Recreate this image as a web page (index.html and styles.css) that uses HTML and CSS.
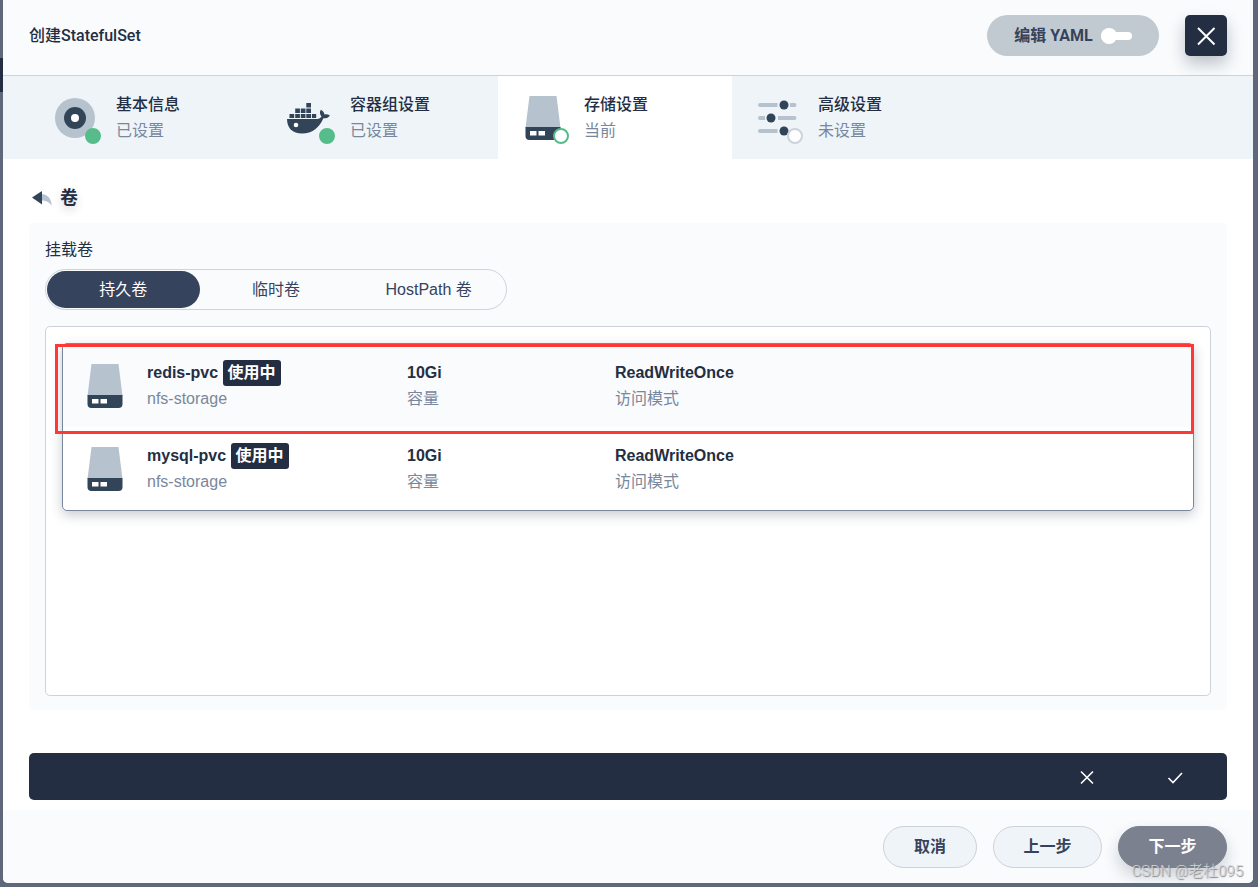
FILE: index.html
```html
<!DOCTYPE html>
<html lang="zh-CN">
<head>
<meta charset="utf-8">
<title>创建StatefulSet</title>
<link rel="stylesheet" href="styles.css">
</head>
<body>
<svg class="defs" aria-hidden="true">
  <symbol id="disk" viewBox="0 0 48 48">
    <path d="M10.500 2h27l4 32h-35z" fill="#b6c2cd"/>
    <path d="M6.500 33h35v9q0 4-4 4h-27q-4 0-4-4z" fill="#324558"/>
    <path d="M11 37h6.500v4.500H11zM19.500 37H26v4.500h-6.500z" fill="#fff"/>
  </symbol>
</svg>
<main class="dialog">
  <header class="header">
    <h1 class="title">创建StatefulSet</h1>
    <button class="yaml" type="button">编辑 YAML <span class="switch"></span></button>
    <button class="close" type="button" aria-label="关闭">
      <svg width="20" height="20" viewBox="0 0 20 20"><path d="M2 2l16.500 16.500M18.500 2L2 18.500" stroke="#fff" stroke-width="2" fill="none"/></svg>
    </button>
  </header>
  <nav class="steps">
    <div class="step">
      <span class="step-icon">
        <svg width="48" height="48" viewBox="0 0 48 48"><circle cx="24" cy="24" r="20" fill="#b6c2cd"/><circle cx="24" cy="24" r="11" fill="#324558"/><circle cx="24" cy="24" r="4" fill="#fff"/></svg>
        <i class="dot done"></i>
      </span>
      <div class="step-text"><div class="name">基本信息</div><div class="state">已设置</div></div>
    </div>
    <div class="step">
      <span class="step-icon">
        <svg width="48" height="48" viewBox="0 0 48 48" fill="#324558">
          <path d="M2 25h28.500c3 0 5.200-.9 6-2.600-2-2-2-4.700-.6-6.600 2.200 1.200 3.200 2.700 3.500 4.600 1.800-.3 3.800-.1 5.500 1-1.300 2.200-3.500 3-6.500 2.900C34 34 27.500 39.500 17 39.500 7.500 39.500 2 34 2 25z"/>
          <path d="M4.500 20h4.700v4H4.500zM10.200 20h4.700v4h-4.700zM15.800 20h4.700v4h-4.700zM21.300 20H26v4h-4.700zM26.900 20h4.300v4h-4.300zM10.200 14.500h4.700v4.500h-4.700zM15.800 14.500h4.700v4.500h-4.700zM21.300 14.500H26v4.500h-4.700zM21.300 9H26v4.500h-4.700z"/>
          <circle cx="11" cy="31" r="2.300" fill="#fff"/>
        </svg>
        <i class="dot done"></i>
      </span>
      <div class="step-text"><div class="name">容器组设置</div><div class="state">已设置</div></div>
    </div>
    <div class="step current">
      <span class="step-icon">
        <svg width="48" height="48"><use href="#disk"/></svg>
        <i class="dot now"></i>
      </span>
      <div class="step-text"><div class="name">存储设置</div><div class="state">当前</div></div>
    </div>
    <div class="step">
      <span class="step-icon">
        <svg width="48" height="48" viewBox="0 0 48 48">
          <path d="M7 11h15M39 11h2.500M7 24h3M27 24h14.500M7 37h15" stroke="#b6c2cd" stroke-width="4" stroke-linecap="round"/>
          <path d="M20 11h4.500M37 11h2M9 24h3M25 24h3M20 37h4.500" stroke="#b6c2cd" stroke-width="4"/>
          <g fill="#324558"><circle cx="31" cy="11" r="4.500"/><circle cx="18" cy="24" r="4.500"/><circle cx="31" cy="37" r="4.500"/></g>
        </svg>
        <i class="dot"></i>
      </span>
      <div class="step-text"><div class="name">高级设置</div><div class="state">未设置</div></div>
    </div>
  </nav>
  <section class="content">
    <div class="back-row">
      <button class="back" type="button" aria-label="返回">
        <svg width="24" height="24" viewBox="0 0 24 24"><path d="M12 8c6 .2 10.500 4 10.700 12C20.500 16 17 14.500 12 14.500z" fill="#b6c2cd"/><path d="M3 11.500L13 5v13.500z" fill="#324558"/></svg>
      </button>
      <h2 class="back-title">卷</h2>
    </div>
    <div class="panel">
      <div class="label">挂载卷</div>
      <div class="tabs">
        <button class="tab active" type="button">持久卷</button>
        <button class="tab" type="button">临时卷</button>
        <button class="tab" type="button">HostPath 卷</button>
      </div>
      <div class="list-box">
        <div class="list">
          <div class="row selected">
            <svg width="48" height="48"><use href="#disk"/></svg>
            <div><div class="strong">redis-pvc <span class="tag">使用中</span></div><div class="muted">nfs-storage</div></div>
            <div><div class="strong">10Gi</div><div class="muted">容量</div></div>
            <div><div class="strong">ReadWriteOnce</div><div class="muted">访问模式</div></div>
          </div>
          <div class="row">
            <svg width="48" height="48"><use href="#disk"/></svg>
            <div><div class="strong">mysql-pvc <span class="tag">使用中</span></div><div class="muted">nfs-storage</div></div>
            <div><div class="strong">10Gi</div><div class="muted">容量</div></div>
            <div><div class="strong">ReadWriteOnce</div><div class="muted">访问模式</div></div>
          </div>
          <div class="highlight"></div>
        </div>
      </div>
    </div>
    <div class="confirm">
      <button type="button" aria-label="取消选择"><svg width="16" height="16" viewBox="0 0 16 16"><path d="M2 2.500l12 12M14 2.500l-12 12" stroke="#fff" stroke-width="1.600" fill="none"/></svg></button>
      <button type="button" aria-label="确认选择"><svg width="16" height="16" viewBox="0 0 16 16"><path d="M1.500 9l4.500 4.500L15 4" stroke="#fff" stroke-width="1.600" fill="none"/></svg></button>
    </div>
  </section>
  <footer class="footer">
    <button class="btn" type="button">取消</button>
    <button class="btn wide" type="button">上一步</button>
    <button class="btn wide next" type="button">下一步</button>
  </footer>
</main>
<div class="watermark">CSDN @老杜095</div>
</body>
</html>
```
FILE: styles.css
```css
* { box-sizing: border-box; }
body {
  margin: 0;
  padding: 0 5px 4px 3px;
  min-height: 100vh;
  display: flex;
  background: linear-gradient(#242e42, #242e42) 0 58px / 3px 34px no-repeat, #5f687b;
  font: 16px/26px Roboto, "Noto Sans CJK SC", sans-serif;
  color: #242e42;
}
button { font: inherit; color: inherit; border: 0; padding: 0; background: none; cursor: pointer; }
svg { display: block; flex: none; }
h1, h2 { margin: 0; }
.defs { position: absolute; width: 0; height: 0; }
.dialog {
  flex: 1;
  min-width: 0;
  display: flex;
  flex-direction: column;
  background: #fff;
  border-radius: 0 0 5px 5px;
  overflow: hidden;
}
.header {
  display: flex;
  align-items: center;
  padding: 15px 26px 19px;
  background: #f9fbfd;
  border-bottom: 1px solid #ccd3db;
}
.title { flex: 1; font-size: 16px; font-weight: 500; }
.yaml {
  display: flex;
  align-items: center;
  justify-content: center;
  gap: 8px;
  width: 172px;
  height: 41px;
  margin-right: 26px;
  border-radius: 21px;
  background: #c1c9d1;
  color: #36435c;
  font-weight: 700;
}
.switch { display: flex; align-items: center; width: 31px; height: 8px; border-radius: 4px; background: #fff; }
.switch::before { content: ""; width: 16px; height: 16px; border-radius: 50%; background: #fff; }
.close {
  display: grid;
  place-items: center;
  width: 42px;
  height: 41px;
  border-radius: 5px;
  background: #242e42;
  box-shadow: 0 8px 16px rgba(36, 46, 66, .28);
}
.steps { display: flex; padding-left: 27px; background: #eff4f9; }
.step { display: flex; gap: 17px; width: 234px; height: 83px; padding: 15px 21px; }
.step.current { background: #fff; }
.step-icon { position: relative; padding-top: 3px; }
.step-text { padding-top: 1px; }
.dot {
  position: absolute;
  right: -2px;
  bottom: 0;
  width: 16px;
  height: 16px;
  border: 2px solid #ccd3db;
  border-radius: 50%;
  background: #fff;
}
.dot.done { border-color: #55bc8a; background: #55bc8a; }
.dot.now { border-color: #55bc8a; }
.name { font-weight: 500; }
.state, .muted { color: #79879c; }
.content { flex: 1; display: flex; flex-direction: column; padding: 26px 26px 10px; }
.back-row { display: flex; align-items: center; gap: 7px; margin-bottom: 12px; }
.back-title { font-size: 18px; line-height: 26px; font-weight: 700; text-shadow: 0 4px 8px rgba(36, 46, 66, .2); }
.panel { flex: 1; display: flex; flex-direction: column; padding: 14px 16px; border-radius: 5px; background: #f9fbfd; }
.tabs {
  display: flex;
  width: 462px;
  height: 41px;
  margin: 6px 0 16px;
  padding: 1px;
  border: 1px solid #ccd3db;
  border-radius: 21px;
}
.tabs, .list { font-family: "Liberation Sans", "Noto Sans CJK SC", sans-serif; }
.tab { flex: 1; border-radius: 19px; color: #36435c; }
.tab.active { background: #36435c; color: #fff; }
.list-box { flex: 1; padding: 16px; border: 1px solid #ccd3db; border-radius: 5px; background: #fff; }
.list {
  position: relative;
  border: 1px solid #79879c;
  border-radius: 5px;
  box-shadow: 0 4px 12px rgba(36, 46, 66, .25);
}
.row {
  display: grid;
  grid-template-columns: 48px 260px 208px 1fr;
  padding: 16px 18px 15px;
}
.row > svg { margin-top: 2px; }
.row > div { padding-left: 18px; }
.selected { background: #f9fbfd; border-radius: 5px 5px 0 0; }
.strong { font-weight: 700; }
.tag { display: inline-block; padding: 0 5px; border-radius: 3px; background: #242e42; color: #fff; }
.highlight { position: absolute; inset: 0 -1px 76px -8px; border: 3px solid #ff3737; }
.confirm {
  display: flex;
  justify-content: flex-end;
  gap: 8px;
  height: 47px;
  margin-top: 43px;
  padding-right: 12px;
  border-radius: 5px;
  background: #242e42;
}
.confirm button { display: grid; place-items: center; width: 80px; }
.footer { display: flex; justify-content: flex-end; gap: 16px; padding: 16px 26px 15px; background: #f9fbfd; }
.btn {
  width: 94px;
  height: 42px;
  border: 1px solid #ccd3db;
  border-radius: 21px;
  background: #eff4f9;
  color: #36435c;
  font-weight: 700;
}
.wide { width: 109px; }
.next { border-color: #7c8190; background: #7c8190; color: #fff; box-shadow: 0 8px 16px rgba(36, 46, 66, .2); }
.watermark {
  position: absolute;
  right: 15px;
  bottom: 3px;
  color: #d4d6da;
  font-size: 15px;
  font-weight: 300;
  text-shadow: 1px 1px 1px #777;
}
```
